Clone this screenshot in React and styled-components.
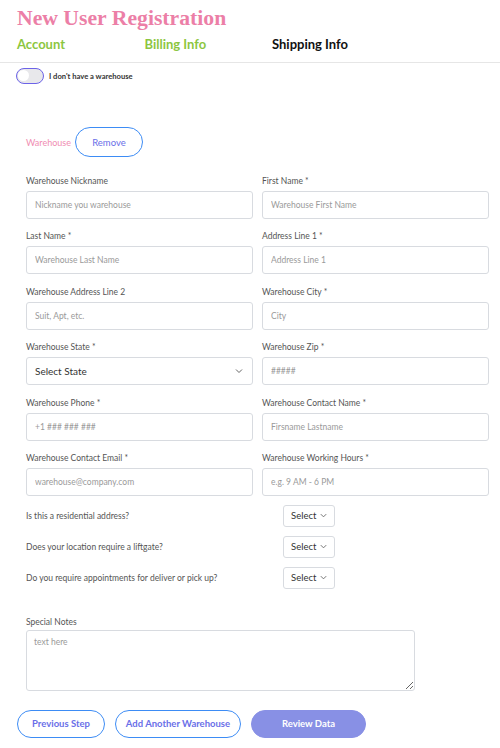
import React, { useState } from "react";
import styled, { createGlobalStyle } from "styled-components";

const GlobalStyle = createGlobalStyle`
  body {
    margin: 0;
    background: #ffffff;
    font-family: Lato, "Noto Sans", sans-serif;
  }
  * {
    box-sizing: border-box;
  }
`;

const Page = styled.div`
  width: 500px;
  min-height: 748px;
  background: #fff;
`;

const Title = styled.h1`
  margin: 6px 0 0 17px;
  font-family: "Liberation Serif", serif;
  font-weight: 700;
  font-size: 21.7px;
  line-height: 24px;
  color: #ec7fa7;
`;

const Tabs = styled.div`
  display: grid;
  grid-template-columns: repeat(3, 127.5px);
  margin-top: 2px;
  padding: 3px 0 9px 17px;
  border-bottom: 1px solid #e6e6e6;
`;

const Tab = styled.div`
  font-size: 13px;
  font-weight: 700;
  line-height: 18px;
  color: ${(p) => (p.$active ? "#111111" : "#8cc63f")};
`;

const ToggleRow = styled.label`
  display: flex;
  align-items: center;
  gap: 5px;
  margin-top: 5px;
  padding-left: 16px;
  font-size: 7.6px;
  font-weight: 700;
  color: #333;
`;

const Toggle = styled.span`
  position: relative;
  width: 28px;
  height: 16px;
  border: 1.5px solid #6c63e8;
  border-radius: 10px;
  background: #e8e8eb;

  &::after {
    content: "";
    position: absolute;
    left: 1px;
    top: 1px;
    width: 11px;
    height: 11px;
    border-radius: 50%;
    background: #fff;
  }
`;

const WarehouseRow = styled.div`
  display: flex;
  align-items: center;
  gap: 4px;
  margin-top: 43px;
  padding-left: 26px;
`;

const WarehouseTag = styled.span`
  font-size: 9px;
  color: #f08db2;
`;

const PillButton = styled.button`
  width: ${(p) => p.$w}px;
  height: ${(p) => p.$h || 28}px;
  border-radius: 20px;
  border: 1.5px solid ${(p) => (p.$filled ? "#8890e5" : "#3d8cf5")};
  background: ${(p) => (p.$filled ? "#8890e5" : "#fff")};
  color: ${(p) => (p.$filled ? "#fff" : "#6a6fe8")};
  font-family: Lato, "Noto Sans", sans-serif;
  font-size: 9.5px;
  font-weight: ${(p) => (p.$bold ? 700 : 400)};
  cursor: pointer;
  padding: 0;
`;

const FormGrid = styled.div`
  display: grid;
  grid-template-columns: 227px 227px;
  column-gap: 9px;
  row-gap: 11.4px;
  margin-top: 18px;
  padding-left: 26px;
`;

const Field = styled.div`
  display: flex;
  flex-direction: column;
  gap: 4px;
`;

const Label = styled.label`
  font-size: 8.5px;
  line-height: 12px;
  color: #555;
`;

const Input = styled.input`
  height: 28px;
  width: 100%;
  border: 1px solid #d8dbe0;
  border-radius: 3px;
  padding: 0 8px;
  font-family: Lato, "Noto Sans", sans-serif;
  font-size: 8.5px;
  color: #333;
  outline: none;

  &::placeholder {
    color: #9a9a9a;
  }
`;

const SelectBox = styled.button`
  display: flex;
  align-items: center;
  justify-content: space-between;
  width: ${(p) => (p.$small ? "52px" : "100%")};
  height: ${(p) => (p.$small ? "22px" : "28px")};
  border: 1px solid #d8dbe0;
  border-radius: 3px;
  background: #fff;
  padding: ${(p) => (p.$small ? "0 6px 0 7px" : "0 8px")};
  font-family: Lato, "Noto Sans", sans-serif;
  font-size: ${(p) => (p.$small ? "9.5px" : "10px")};
  color: #333;
  cursor: pointer;
`;

const Questions = styled.div`
  display: flex;
  flex-direction: column;
  gap: 9px;
  margin-top: 9px;
  padding-left: 26px;
`;

const QuestionRow = styled.div`
  display: grid;
  grid-template-columns: 257px auto;
  align-items: center;
`;

const NotesBlock = styled.div`
  display: flex;
  flex-direction: column;
  gap: 2px;
  margin-top: 27px;
  padding-left: 26px;
`;

const Notes = styled.textarea`
  width: 389px;
  height: 61px;
  border: 1px solid #d8dbe0;
  border-radius: 3px;
  padding: 6px 7px;
  font-family: Lato, "Noto Sans", sans-serif;
  font-size: 8.5px;
  outline: none;

  &::placeholder {
    color: #9a9a9a;
  }
`;

const Actions = styled.div`
  display: flex;
  gap: 10px;
  margin-top: 19px;
  padding-left: 17px;
`;

const Chevron = ({ size = 10 }) => (
  <svg width={size} height={size} viewBox="0 0 10 10">
    <path d="M2 3.5 L5 6.5 L8 3.5" fill="none" stroke="#666" strokeWidth="1" />
  </svg>
);

const fields = [
  ["Warehouse Nickname", "Nickname you warehouse"],
  ["First Name *", "Warehouse First Name"],
  ["Last Name *", "Warehouse Last Name"],
  ["Address Line 1 *", "Address Line 1"],
  ["Warehouse Address Line 2", "Suit, Apt, etc."],
  ["Warehouse City *", "City"],
  ["Warehouse State *", null],
  ["Warehouse Zip *", "#####"],
  ["Warehouse Phone *", "+1 ### ### ###"],
  ["Warehouse Contact Name *", "Firsname Lastname"],
  ["Warehouse Contact Email *", "warehouse@company.com"],
  ["Warehouse Working Hours *", "e.g. 9 AM - 6 PM"],
];

const questions = [
  "Is this a residential address?",
  "Does your location require a liftgate?",
  "Do you require appointments for deliver or pick up?",
];

export default function App() {
  const [noWarehouse, setNoWarehouse] = useState(false);

  return (
    <Page>
      <GlobalStyle />
      <Title>New User Registration</Title>
      <Tabs>
        <Tab>Account</Tab>
        <Tab>Billing Info</Tab>
        <Tab $active>Shipping Info</Tab>
      </Tabs>

      <ToggleRow onClick={() => setNoWarehouse(!noWarehouse)}>
        <Toggle />
        I don't have a warehouse
      </ToggleRow>

      <WarehouseRow>
        <WarehouseTag>Warehouse</WarehouseTag>
        <PillButton $w={68} $h={30}>
          Remove
        </PillButton>
      </WarehouseRow>

      <FormGrid>
        {fields.map(([label, ph]) => (
          <Field key={label}>
            <Label>{label}</Label>
            {ph === null ? (
              <SelectBox>
                Select State
                <Chevron />
              </SelectBox>
            ) : (
              <Input placeholder={ph} />
            )}
          </Field>
        ))}
      </FormGrid>

      <Questions>
        {questions.map((q) => (
          <QuestionRow key={q}>
            <Label>{q}</Label>
            <SelectBox $small>
              Select
              <Chevron size={9} />
            </SelectBox>
          </QuestionRow>
        ))}
      </Questions>

      <NotesBlock>
        <Label>Special Notes</Label>
        <Notes placeholder="text here" />
      </NotesBlock>

      <Actions>
        <PillButton $w={88} $bold>
          Previous Step
        </PillButton>
        <PillButton $w={126} $bold>
          Add Another Warehouse
        </PillButton>
        <PillButton $w={115} $filled $bold>
          Review Data
        </PillButton>
      </Actions>
    </Page>
  );
}
